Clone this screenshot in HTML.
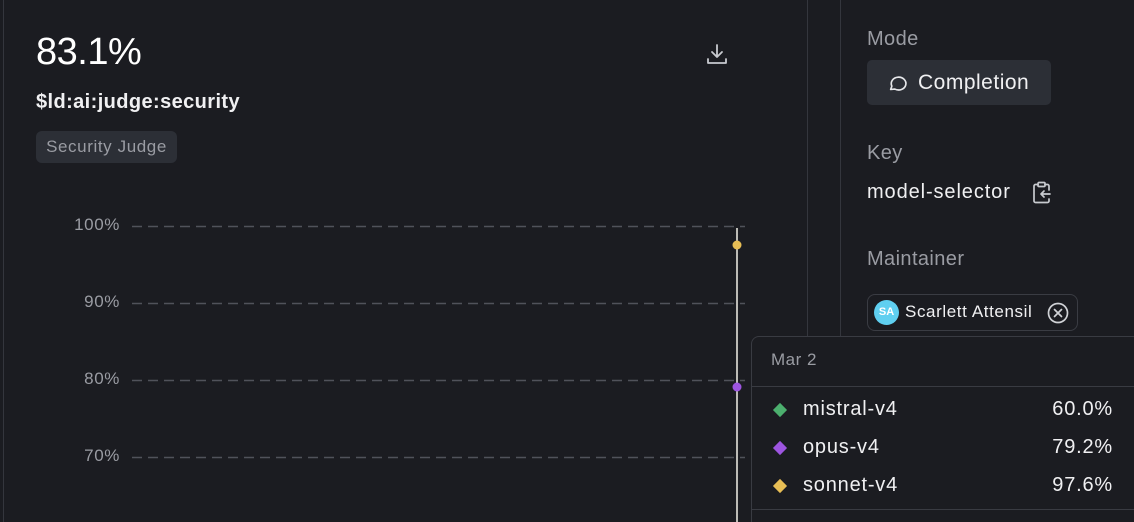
<!DOCTYPE html>
<html style="overflow:hidden"><head><meta charset="utf-8"><style>
html,body{margin:0;width:1134px;height:522px;overflow:hidden}
body{background:#1b1c21;font-family:"Liberation Sans",sans-serif;position:relative;color:#fff}
.a{position:absolute;white-space:nowrap}
.vl{position:absolute;top:0;width:1px;background:#34363d}
.ax{left:50px;width:70px;text-align:right;color:#9a9ca3;font-size:17px;letter-spacing:0.6px}
.row{font-size:20px;color:#f0f0f2;letter-spacing:0.8px}
.lab{color:#9a9ca3;font-size:20px;letter-spacing:0.4px}
</style></head><body>
<div class="vl" style="left:3px;height:522px"></div>
<div class="vl" style="left:807px;height:336px"></div>
<div class="vl" style="left:840px;height:336px"></div>

<div class="a" style="left:36px;top:31px;font-size:38px;letter-spacing:-0.5px">83.1%</div>
<div class="a" style="left:36px;top:91px;font-size:20px;font-weight:bold;color:#f0f0f2;letter-spacing:0.4px">$ld:ai:judge:security</div>
<div class="a" style="left:36px;top:131px;width:141px;height:32px;background:#2c2f36;border-radius:6px;color:#9a9ca3;font-size:17px;letter-spacing:0.6px;line-height:32px;text-align:center">Security Judge</div>
<svg class="a" style="left:705px;top:42px" width="24" height="24" viewBox="0 0 24 24" fill="none" stroke="#c8cacf" stroke-width="1.8" stroke-linecap="round" stroke-linejoin="round"><path d="M12 3v12M7 10l5 5 5-5M3 17v4h18v-4"/></svg>

<div class="a ax" style="top:215px">100%</div>
<div class="a ax" style="top:292px">90%</div>
<div class="a ax" style="top:369px">80%</div>
<div class="a ax" style="top:446px">70%</div>
<svg class="a" style="left:0;top:0" width="760" height="522">
<g stroke="#50525a" stroke-width="1.5" stroke-dasharray="10 6">
<line x1="132" y1="226.5" x2="745" y2="226.5"/><line x1="132" y1="303.5" x2="745" y2="303.5"/><line x1="132" y1="380.5" x2="745" y2="380.5"/><line x1="132" y1="457.5" x2="745" y2="457.5"/></g>
<line x1="737" y1="228" x2="737" y2="522" stroke="#f2f0e8" stroke-width="1.5"/>
<circle cx="737" cy="245" r="4.5" fill="#e8be55"/>
<circle cx="737" cy="387" r="4.5" fill="#9d55e0"/>
</svg>

<div class="a lab" style="left:867px;top:28px">Mode</div>
<div class="a" style="left:867px;top:60px;width:184px;height:45px;background:#2c2f36;border-radius:5px"></div>
<svg class="a" style="left:887px;top:72px" width="22" height="22" viewBox="0 0 24 24" fill="none" stroke="#e6e7ea" stroke-width="1.8" stroke-linejoin="round"><path d="M4 19l1.3-3.6A8 7 0 1 1 8.5 18.6z"/></svg>
<div class="a" style="left:918px;top:71px;font-size:21px;color:#f0f0f2;letter-spacing:0.5px">Completion</div>
<div class="a lab" style="left:867px;top:142px">Key</div>
<div class="a" style="left:867px;top:181px;color:#f0f0f2;font-size:20px;letter-spacing:0.9px">model-selector</div>
<svg class="a" style="left:1031px;top:181px" width="22" height="24" viewBox="0 0 22 24" fill="none" stroke="#c8cacf" stroke-width="1.7" stroke-linecap="round" stroke-linejoin="round"><rect x="7" y="1.5" width="7" height="4" rx="1"/><path d="M7 3.5H4.5a1.5 1.5 0 0 0-1.5 1.5v15a1.5 1.5 0 0 0 1.5 1.5h12a1.5 1.5 0 0 0 1.5-1.5V18M14 3.5h2.5a1.5 1.5 0 0 1 1.5 1.5v4M19 13h-9M13 10l-3 3 3 3"/></svg>
<div class="a lab" style="left:867px;top:248px">Maintainer</div>
<div class="a" style="left:867px;top:294px;width:211px;height:37px;border:1px solid #3a3c43;border-radius:8px;box-sizing:border-box"></div>
<div class="a" style="left:874px;top:300px;width:25px;height:25px;border-radius:50%;background:#5fcff0;color:#fff;font-size:11px;font-weight:bold;line-height:25px;text-align:center">SA</div>
<div class="a" style="left:905px;top:302px;color:#f0f0f2;font-size:17px;letter-spacing:0.6px">Scarlett Attensil</div>
<svg class="a" style="left:1047px;top:302px" width="22" height="22" viewBox="0 0 22 22" fill="none" stroke="#d0d2d6" stroke-width="1.7" stroke-linecap="round"><circle cx="11" cy="11" r="9.5"/><path d="M7.5 7.5l7 7M14.5 7.5l-7 7"/></svg>

<div class="a" style="left:751px;top:336px;width:390px;height:186px;background:#1b1c21;border:1px solid #393b42;border-bottom:none;border-radius:8px 8px 0 0;box-sizing:border-box"></div>
<div class="a" style="left:771px;top:350px;color:#9a9ca3;font-size:17px;letter-spacing:0.5px">Mar 2</div>
<div class="a" style="left:752px;top:386px;width:382px;height:1px;background:#393b42"></div>
<div class="a" style="left:752px;top:509px;width:382px;height:1px;background:#393b42"></div>
<div class="a" style="left:775px;top:405px;width:10px;height:10px;background:#4caf6e;transform:rotate(45deg)"></div>
<div class="a" style="left:775px;top:443px;width:10px;height:10px;background:#9d55e0;transform:rotate(45deg)"></div>
<div class="a" style="left:775px;top:481px;width:10px;height:10px;background:#e8be55;transform:rotate(45deg)"></div>
<div class="a row" style="left:803px;top:398px">mistral-v4</div>
<div class="a row" style="left:803px;top:436px">opus-v4</div>
<div class="a row" style="left:803px;top:474px">sonnet-v4</div>
<div class="a row" style="left:1000px;top:398px;width:113px;text-align:right">60.0%</div>
<div class="a row" style="left:1000px;top:436px;width:113px;text-align:right">79.2%</div>
<div class="a row" style="left:1000px;top:474px;width:113px;text-align:right">97.6%</div>
</body></html>
